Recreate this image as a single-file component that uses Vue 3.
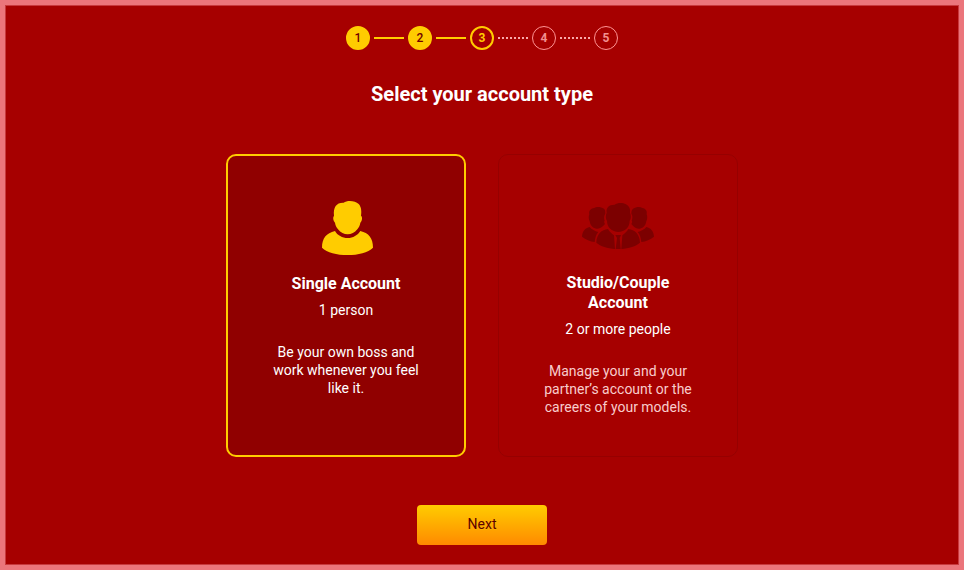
<script setup>
import { ref } from 'vue'

const steps = [
  { number: 1, state: 'done' },
  { number: 2, state: 'done' },
  { number: 3, state: 'current' },
  { number: 4, state: 'upcoming' },
  { number: 5, state: 'upcoming' },
]

const accounts = [
  {
    id: 'single',
    title: 'Single Account',
    people: '1 person',
    description: 'Be your own boss and work whenever you feel like it.',
  },
  {
    id: 'studio',
    title: 'Studio/Couple Account',
    people: '2 or more people',
    description: 'Manage your and your partner’s account or the careers of your models.',
  },
]

const selected = ref('single')
</script>

<template>
  <div class="frame">
    <main class="page">
      <ol class="stepper">
        <li v-for="step in steps" :key="step.number" class="step" :class="step.state">
          <span class="dot">{{ step.number }}</span>
        </li>
      </ol>

      <h1 id="account-heading" class="heading">Select your account type</h1>

      <form class="form" @submit.prevent>
        <div class="cards" role="radiogroup" aria-labelledby="account-heading">
          <label
            v-for="account in accounts"
            :key="account.id"
            class="card"
            :class="{ selected: selected === account.id }"
          >
            <input v-model="selected" class="radio" type="radio" name="account" :value="account.id" />
            <svg v-if="account.id === 'single'" class="icon" viewBox="-12 18 240 192" aria-hidden="true">
              <path d="M72 77C68 81 69 92 75 98C76 105 79 112 84 118C92 128 102 133 113 133C124 133 134 128 142 118C147 112 150 105 151 98C157 92 158 81 153 77C155 65 154 50 146 42C136 32 112 30 101 38C80 37 69 51 72 77Z" />
              <path d="M75 123C82 136 97 144 113 144C129 144 143 136 151 123C176 129 189 144 189 173C174 188 145 195 113 195C80 195 51 188 36 173C36 145 49 129 75 123Z" />
            </svg>
            <svg v-else class="icon" viewBox="24 15 240 192" aria-hidden="true">
              <path d="M110 68C106 76 107 87 111 93C111 101 114 109 119 115C127 123 136 126 145 126C154 126 163 123 171 115C176 109 179 101 179 93C183 87 184 76 180 68C182 58 178 48 168 43C157 37 141 39 134 44C115 44 108 54 110 68Z" />
              <path d="M58 73C55 80 56 89 59 94C60 100 62 106 67 110C72 114 77 116 83 116C91 116 99 110 105 102C102 97 102 94 104 92C101 85 102 76 106 71C106 64 106 59 102 56C92 50 79 50 73 54C60 56 56 63 58 73Z" />
              <path d="M230 73C233 80 232 89 229 94C228 100 226 106 221 110C216 114 211 116 205 116C197 116 190 110 184 102C187 97 187 94 185 92C188 85 188 76 184 71C184 64 185 59 189 56C199 50 211 50 217 54C228 56 232 63 230 73Z" />
              <path d="M59 111C45 114 37 124 36 140C47 149 60 154 74 156C76 142 78 134 85 126C75 123 65 119 59 111Z" />
              <path d="M229 111C243 114 251 124 252 140C241 149 228 154 214 156C212 142 210 134 203 126C213 123 223 119 229 111Z" />
              <path d="M114 117C95 119 80 132 79 158C92 169 112 175 135 177L132 136C125 131 119 125 114 117Z" />
              <path d="M175 117C194 119 209 132 210 158C197 169 177 175 154 177L157 136C164 131 170 125 175 117Z" />
              <path d="M136 135H153L149 144L152 177H137L141 144Z" />
            </svg>
            <span class="title">{{ account.title }}</span>
            <span class="people">{{ account.people }}</span>
            <span class="description">{{ account.description }}</span>
          </label>
        </div>

        <button class="next" type="submit">Next</button>
      </form>
    </main>
  </div>
</template>

<style>
body {
  margin: 0;
  background: #eb757b;
}
</style>

<style scoped>
.frame {
  box-sizing: border-box;
  min-height: 100vh;
  display: flex;
  border: 5px solid #eb757b;
  font-family: Roboto, "Liberation Sans", sans-serif;
  color: #fff;
}

.page {
  flex: 1;
  display: flex;
  flex-direction: column;
  align-items: center;
  padding: 20px 20px 18px;
  border: 1px solid #c8393d;
  background: #a60000;
}

.stepper {
  display: flex;
  margin: 0 0 32px;
  padding: 0;
  list-style: none;
}

.step {
  display: flex;
  align-items: center;
}

.step + .step::before {
  content: "";
  width: 30px;
  margin: 0 4px;
  border-top: 2px solid #fc0;
}

.step.upcoming::before {
  border-top: 2px dotted #f8a8a8;
}

.dot {
  box-sizing: border-box;
  display: flex;
  align-items: center;
  justify-content: center;
  width: 24px;
  height: 24px;
  border: 2px solid #fc0;
  border-radius: 50%;
  font-size: 12px;
  line-height: 16px;
  font-weight: 500;
}

.done .dot {
  background: #fc0;
  color: #700000;
}

.current .dot {
  color: #fc0;
  font-weight: 700;
}

.upcoming .dot {
  border: 1px solid #ff9494;
  color: #f29090;
  font-weight: 700;
}

.heading {
  margin: 0 0 48px;
  font-size: 20px;
  line-height: 24px;
  font-weight: 700;
  text-align: center;
}

.form {
  display: flex;
  flex-direction: column;
  align-items: center;
  gap: 48px;
}

.cards {
  display: flex;
  flex-wrap: wrap;
  justify-content: center;
  gap: 32px;
}

.card {
  box-sizing: border-box;
  position: relative;
  display: flex;
  flex-direction: column;
  align-items: center;
  width: 240px;
  padding: 40px;
  border: 1px solid #960000;
  border-radius: 10px;
  text-align: center;
  cursor: pointer;
}

.card.selected {
  border: 2px solid #fc0;
  background: #900000;
}

.radio {
  position: absolute;
  inset: 0;
  width: 100%;
  height: 100%;
  margin: 0;
  opacity: 0;
  cursor: pointer;
}

.icon {
  width: 80px;
  height: 64px;
  margin-bottom: 14px;
  fill: #7c0000;
}

.selected .icon {
  fill: #fc0;
}

.title {
  margin-bottom: 7px;
  font-size: 16px;
  line-height: 20px;
  font-weight: 700;
}

.people {
  margin-bottom: 24px;
  font-size: 14px;
  line-height: 18px;
}

.description {
  font-size: 14px;
  line-height: 18px;
  color: #f8cccc;
}

.selected .description {
  color: #fff;
}

.next {
  width: 130px;
  height: 40px;
  padding: 0 0 2px;
  border: 0;
  border-radius: 4px;
  background: linear-gradient(#fc0, #ff8a00);
  color: #5c0000;
  font-family: inherit;
  font-size: 14px;
  line-height: 18px;
  text-shadow: 0 1px 0 #ffcc0066;
  cursor: pointer;
}
</style>
